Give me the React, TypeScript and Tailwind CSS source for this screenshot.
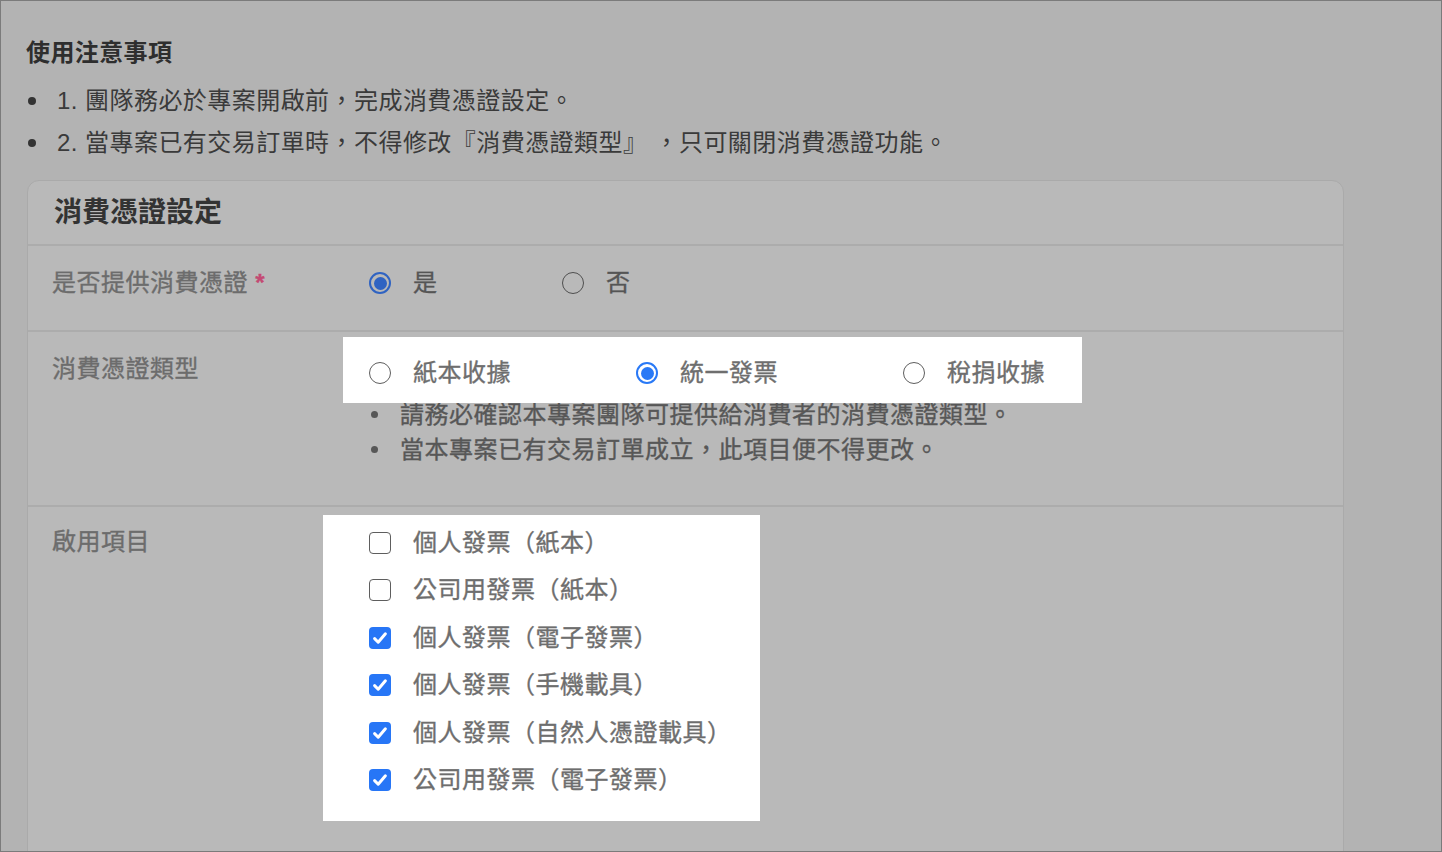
import React from "react";

const FONT = { fontFamily: '"Liberation Sans", "Noto Sans CJK TC", sans-serif' };

// medium-weight look for form text (CJK family only ships regular/bold)
const MEDIUM = "[-webkit-text-stroke:0.35px]";

type Tone = "dim" | "lit";

const Radio = ({ checked, tone }: { checked?: boolean; tone: Tone }) => {
  const blue = tone === "dim" ? "border-[#2f63c2]" : "border-[#2979f6]";
  const dot = tone === "dim" ? "bg-[#2f63c2]" : "bg-[#2979f6]";
  const idle = tone === "dim" ? "border-[#4f4f4f]" : "border-[#5e5e5e]";
  return (
    <span
      className={`flex h-[22px] w-[22px] shrink-0 items-center justify-center rounded-full ${
        checked ? `border-2 ${blue}` : `border-[1.5px] ${idle}`
      }`}
    >
      {checked && <span className={`h-[13px] w-[13px] rounded-full ${dot}`} />}
    </span>
  );
};

const RadioOption = ({
  label,
  checked,
  tone,
  width,
}: {
  label: string;
  checked?: boolean;
  tone: Tone;
  width: string;
}) => (
  <label className={`flex items-center gap-[22px] ${width}`}>
    <Radio checked={checked} tone={tone} />
    <span
      className={`text-[24px] leading-[34px] tracking-[0.5px] ${MEDIUM} ${
        tone === "dim" ? "text-[#555]" : "text-[#6e6e6e]"
      }`}
    >
      {label}
    </span>
  </label>
);

const Checkbox = ({ checked }: { checked?: boolean }) =>
  checked ? (
    <span className="flex h-[22px] w-[22px] shrink-0 items-center justify-center rounded-[4px] bg-[#2776f6]">
      <svg width="22" height="22" viewBox="0 0 22 22" fill="none">
        <path d="M5.6 11.6 9.2 15.2 16.4 6.8" stroke="white" strokeWidth="3" strokeLinecap="round" strokeLinejoin="round" />
      </svg>
    </span>
  ) : (
    <span className="h-[22px] w-[22px] shrink-0 rounded-[4px] border-[1.5px] border-[#5e5e5e]" />
  );

const invoiceItems = [
  { label: "個人發票（紙本）", checked: false },
  { label: "公司用發票（紙本）", checked: false },
  { label: "個人發票（電子發票）", checked: true },
  { label: "個人發票（手機載具）", checked: true },
  { label: "個人發票（自然人憑證載具）", checked: true },
  { label: "公司用發票（電子發票）", checked: true },
];

const notices = [
  "1. 團隊務必於專案開啟前，完成消費憑證設定。",
  "2. 當專案已有交易訂單時，不得修改『消費憑證類型』 ，只可關閉消費憑證功能。",
];

const hints = ["請務必確認本專案團隊可提供給消費者的消費憑證類型。", "當本專案已有交易訂單成立，此項目便不得更改。"];

const RowLabel = ({ children }: { children: React.ReactNode }) => (
  <div className={`w-[317px] shrink-0 text-[24px] leading-[34px] tracking-[0.5px] text-[#6c6c6c] ${MEDIUM}`}>
    {children}
  </div>
);

export default function App() {
  return (
    <div
      style={FONT}
      className="h-[852px] w-[1442px] overflow-hidden border border-[#7b7b7b] bg-[#b3b3b3] pl-[25px] pr-[97px] pt-[35px]"
    >
      <h2 className="text-[24px] font-bold leading-[34px] tracking-[0.4px] text-[#2e2e2e]">使用注意事項</h2>
      <ul className="mt-[10px]">
        {notices.map((n) => (
          <li key={n} className="flex items-center text-[24px] leading-[42px] tracking-[0.45px] text-[#3a3a3a]">
            <span className="ml-[2px] mr-[21px] h-[8px] w-[8px] shrink-0 rounded-full bg-[#333]" />
            {n}
          </li>
        ))}
      </ul>

      <section className="ml-px mt-[16px] h-[700px] rounded-t-[12px] border border-[#aaaaaa] bg-[#b9b9b9]">
        <div className="flex h-[65px] items-center border-b-2 border-[#acacac] px-[26px]">
          <h3 className="text-[28px] font-bold leading-[36px] text-[#333]">消費憑證設定</h3>
        </div>

        {/* 是否提供 */}
        <div className="flex h-[86px] border-b-2 border-[#acacac] pl-[24px] pt-[20px]">
          <RowLabel>
            是否提供消費憑證 <span className="font-bold text-[#c44a73]">*</span>
          </RowLabel>
          <div className="flex h-[34px] items-center">
            <RadioOption label="是" checked tone="dim" width="w-[193px]" />
            <RadioOption label="否" tone="dim" width="w-[193px]" />
          </div>
        </div>

        {/* 類型 */}
        <div className="flex h-[175px] border-b-2 border-[#acacac] pl-[24px]">
          <div className="pt-[20px]">
            <RowLabel>消費憑證類型</RowLabel>
          </div>
          <div className="pt-[5px]">
            <div className="relative z-10 -ml-[26px] flex h-[66px] w-[739px] items-center bg-white pl-[26px] pt-[6px]">
              <RadioOption label="紙本收據" tone="lit" width="w-[267px]" />
              <RadioOption label="統一發票" checked tone="lit" width="w-[267px]" />
              <RadioOption label="稅捐收據" tone="lit" width="w-[160px]" />
            </div>
            <ul className="-mt-[6px]">
              {hints.map((h) => (
                <li
                  key={h}
                  className={`flex items-center text-[24px] leading-[35px] tracking-[0.5px] text-[#575757] ${MEDIUM}`}
                >
                  <span className="ml-[2px] mr-[22px] h-[7px] w-[7px] shrink-0 rounded-full bg-[#575757]" />
                  {h}
                </li>
              ))}
            </ul>
          </div>
        </div>

        {/* 啟用項目 */}
        <div className="flex pl-[24px]">
          <div className="pt-[18px]">
            <RowLabel>啟用項目</RowLabel>
          </div>
          <div className="pt-[8px]">
            <div className="-ml-[46px] w-[437px] bg-white pb-[17px] pl-[46px] pt-[4px]">
              {invoiceItems.map((item) => (
                <label key={item.label} className="flex h-[47.5px] items-center gap-[22px]">
                  <Checkbox checked={item.checked} />
                  <span className={`text-[24px] leading-[34px] tracking-[0.5px] text-[#6e6e6e] ${MEDIUM}`}>
                    {item.label}
                  </span>
                </label>
              ))}
            </div>
          </div>
        </div>
      </section>
    </div>
  );
}
